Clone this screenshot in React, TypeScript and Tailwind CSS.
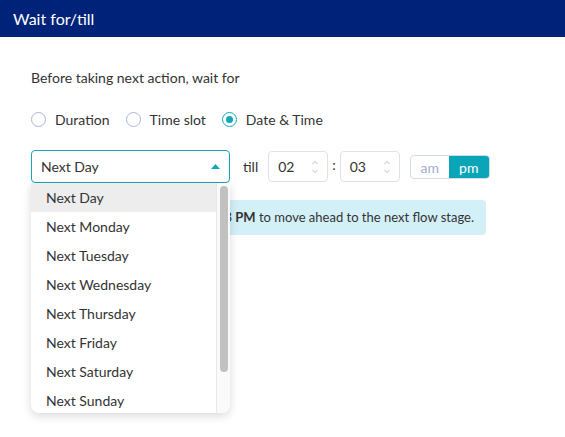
import { useState } from "react";

const days = [
  "Next Day",
  "Next Monday",
  "Next Tuesday",
  "Next Wednesday",
  "Next Thursday",
  "Next Friday",
  "Next Saturday",
  "Next Sunday",
];

const Radio = ({ label, checked }: { label: string; checked?: boolean }) => (
  <label className="flex items-center gap-[9px]">
    <span
      className={`flex h-[15px] w-[15px] items-center justify-center rounded-full border ${
        checked ? "border-[#12a8b9]" : "border-[#aab6da]"
      }`}
    >
      {checked && <span className="h-[7px] w-[7px] rounded-full bg-[#12a8b9]" />}
    </span>
    <span>{label}</span>
  </label>
);

const Spinner = ({ value }: { value: string }) => (
  <div className="flex h-[31px] w-[60px] items-center justify-between rounded-[4px] border border-[#dde2ee] pl-[9px] pr-[8px]">
    <span>{value}</span>
    <svg width="8" height="18" viewBox="0 0 8 18" className="text-[#d3d7df]">
      <path d="M1.5 6 L4 3.5 L6.5 6" fill="none" stroke="currentColor" strokeWidth="1.2" />
      <path d="M1.5 12 L4 14.5 L6.5 12" fill="none" stroke="currentColor" strokeWidth="1.2" />
    </svg>
  </div>
);

export default function App() {
  const [selected] = useState("Next Day");

  return (
    <div className="h-[437px] w-[565px] bg-white font-['Lato',sans-serif] text-[14px] text-[#333]">
      <div className="flex h-[37px] items-center bg-[#002379] px-[13px] text-[16px] text-white">
        Wait for/till
      </div>

      <div className="px-[31px] pt-[30px]">
        <p>Before taking next action, wait for</p>

        <div className="mt-[21px] flex items-center gap-[16px]">
          <Radio label="Duration" />
          <Radio label="Time slot" />
          <Radio label="Date & Time" checked />
        </div>

        <div className="mt-[20px] flex items-center">
          <div className="relative">
            <div className="flex h-[33px] w-[199px] items-center justify-between rounded-[4px] border border-[#19a6b6] pl-[9px] pr-[9px]">
              <span>{selected}</span>
              <svg width="9" height="5" viewBox="0 0 9 5">
                <path d="M0 5 L4.5 0 L9 5 Z" fill="#12a8b9" />
              </svg>
            </div>

            {/* open dropdown list */}
            <div className="absolute left-0 top-[33px] z-10 flex h-[230px] w-[199px] overflow-hidden rounded-b-[8px] bg-white shadow-[0_3px_10px_rgba(0,0,0,0.15)]">
              <ul className="flex-1">
                {days.map((d) => (
                  <li
                    key={d}
                    className={`flex h-[29px] items-center pl-[15px] ${
                      d === selected ? "bg-[#ededed]" : ""
                    }`}
                  >
                    {d}
                  </li>
                ))}
              </ul>
              <div className="w-[14px] border-l border-[#e8e8e8] bg-[#fafafa] pl-[3px] pt-[3px]">
                <div className="h-[186px] w-[8px] rounded-full bg-[#c1c1c1]" />
              </div>
            </div>
          </div>

          <span className="ml-[13px] mr-[10px]">till</span>
          <Spinner value="02" />
          <span className="mx-[4px] -mt-[4px]">:</span>
          <Spinner value="03" />

          <div className="ml-[10px] mt-[1px] flex h-[24px] overflow-hidden rounded-[4px] border border-[#d5dbeb]">
            <span className="flex w-[38px] items-center justify-center text-[#a3acd0]">am</span>
            <span className="flex w-[40px] items-center justify-center bg-[#0ba5b8] text-white">pm</span>
          </div>
        </div>

        <div className="mt-[17px] flex h-[35px] w-[455px] items-center justify-end rounded-[4px] bg-[#d3f0f8] pr-[12px] text-[13px]">
          <span className="whitespace-nowrap">
            Wait till Next Day 02:03 <b>PM</b> to move ahead to the next flow stage.
          </span>
        </div>
      </div>
    </div>
  );
}
